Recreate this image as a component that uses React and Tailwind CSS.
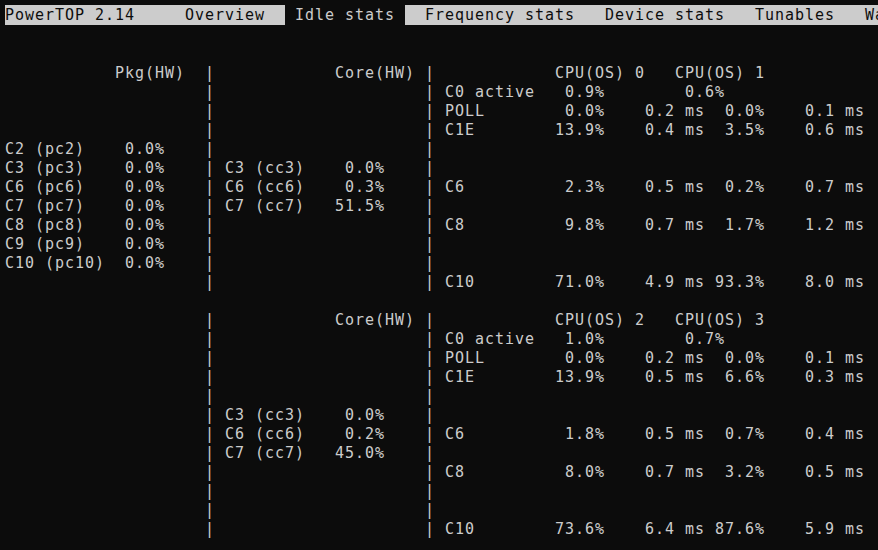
import React from "react";

// build a terminal row from [column, text] pairs
const row = (...parts) => {
  let s = "";
  parts.forEach(([col, text]) => {
    if (s.length < col) s = s + " ".repeat(col - s.length);
    s = s + text;
  });
  return s;
};

const P1 = [20, "|"];
const P2 = [42, "|"];

const lines = [
  "",
  "",
  row([11, "Pkg(HW)"], P1, [33, "Core(HW)"], P2, [55, "CPU(OS) 0"], [67, "CPU(OS) 1"]),
  row(P1, P2, [44, "C0 active"], [56, "0.9%"], [68, "0.6%"]),
  row(P1, P2, [44, "POLL"], [56, "0.0%"], [64, "0.2 ms"], [72, "0.0%"], [80, "0.1 ms"]),
  row(P1, P2, [44, "C1E"], [55, "13.9%"], [64, "0.4 ms"], [72, "3.5%"], [80, "0.6 ms"]),
  row([0, "C2 (pc2)"], [12, "0.0%"], P1, P2),
  row([0, "C3 (pc3)"], [12, "0.0%"], P1, [22, "C3 (cc3)"], [34, "0.0%"], P2),
  row([0, "C6 (pc6)"], [12, "0.0%"], P1, [22, "C6 (cc6)"], [34, "0.3%"], P2, [44, "C6"], [56, "2.3%"], [64, "0.5 ms"], [72, "0.2%"], [80, "0.7 ms"]),
  row([0, "C7 (pc7)"], [12, "0.0%"], P1, [22, "C7 (cc7)"], [33, "51.5%"], P2),
  row([0, "C8 (pc8)"], [12, "0.0%"], P1, P2, [44, "C8"], [56, "9.8%"], [64, "0.7 ms"], [72, "1.7%"], [80, "1.2 ms"]),
  row([0, "C9 (pc9)"], [12, "0.0%"], P1, P2),
  row([0, "C10 (pc10)"], [12, "0.0%"], P1, P2),
  row(P1, P2, [44, "C10"], [55, "71.0%"], [64, "4.9 ms"], [71, "93.3%"], [80, "8.0 ms"]),
  "",
  row(P1, [33, "Core(HW)"], P2, [55, "CPU(OS) 2"], [67, "CPU(OS) 3"]),
  row(P1, P2, [44, "C0 active"], [56, "1.0%"], [68, "0.7%"]),
  row(P1, P2, [44, "POLL"], [56, "0.0%"], [64, "0.2 ms"], [72, "0.0%"], [80, "0.1 ms"]),
  row(P1, P2, [44, "C1E"], [55, "13.9%"], [64, "0.5 ms"], [72, "6.6%"], [80, "0.3 ms"]),
  row(P1, P2),
  row(P1, [22, "C3 (cc3)"], [34, "0.0%"], P2),
  row(P1, [22, "C6 (cc6)"], [34, "0.2%"], P2, [44, "C6"], [56, "1.8%"], [64, "0.5 ms"], [72, "0.7%"], [80, "0.4 ms"]),
  row(P1, [22, "C7 (cc7)"], [33, "45.0%"], P2),
  row(P1, P2, [44, "C8"], [56, "8.0%"], [64, "0.7 ms"], [72, "3.2%"], [80, "0.5 ms"]),
  row(P1, P2),
  row(P1, P2),
  row(P1, P2, [44, "C10"], [55, "73.6%"], [64, "6.4 ms"], [71, "87.6%"], [80, "5.9 ms"]),
];

const App = () => {
  return (
    <div className="w-[878px] h-[550px] overflow-hidden bg-[#0c0c0c] text-[#cccccc] pt-[5px] pl-[5px] font-['DejaVu_Sans_Mono',monospace] text-[15px] leading-[19px] tracking-[0.97px]">
      <div className="flex whitespace-pre bg-[#cccccc] text-[#0c0c0c] h-[20px] pt-[1px] w-[900px]">
        <span>{"PowerTOP 2.14     Overview  "}</span>
        <span className="bg-[#0c0c0c] text-[#cccccc] -mt-[1px] pt-[1px]">{" Idle stats "}</span>
        <span>{"  Frequency stats   Device stats   Tunables   WakeUp"}</span>
      </div>
      <div className="pt-[1px]">
        {lines.map((l, i) => (
          <div key={i} className="whitespace-pre h-[19px]">
            {l}
          </div>
        ))}
      </div>
    </div>
  );
};

export default App;
